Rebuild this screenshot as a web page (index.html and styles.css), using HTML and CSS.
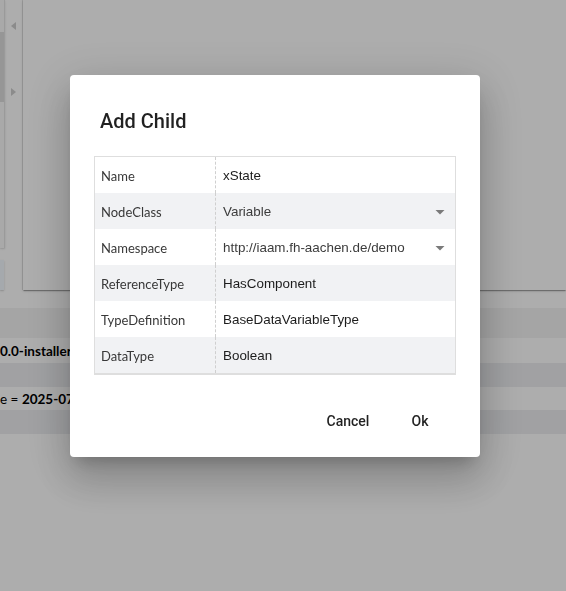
FILE: index.html
```html
<!DOCTYPE html>
<html lang="en">
<head>
<meta charset="utf-8">
<title>Add Child</title>
<link rel="stylesheet" href="styles.css">
</head>
<body>
<div class="page">
  <div class="top">
    <div class="rail">
      <div class="strip"><div class="thumb"></div></div>
      <div class="railbtn"></div>
    </div>
    <div class="arrows">
      <span class="arr arr-left"></span>
      <span class="arr arr-right"></span>
    </div>
    <div class="card"></div>
  </div>
  <div class="list">
    <div class="band b1"></div>
    <div class="band b2 shade"></div>
    <div class="band b3"><span class="line"><b>0.0-installer,</b></span></div>
    <div class="band b4 shade2"></div>
    <div class="band b5"><span class="line">e = <b>2025-07</b></span></div>
    <div class="band b6 shade2"></div>
  </div>
</div>

<div class="overlay"></div>

<div class="dialog" role="dialog" aria-labelledby="dlg-title">
  <h2 class="dialog-title" id="dlg-title">Add Child</h2>
  <div class="props">
    <div class="prop">
      <div class="prop-key">Name</div>
      <div class="prop-val">xState</div>
    </div>
    <div class="prop alt">
      <div class="prop-key">NodeClass</div>
      <div class="prop-val select"><span>Variable</span>
        <svg class="caret" viewBox="0 0 24 24" width="24" height="24"><path d="M7.5 10l4.5 4.5 4.5-4.5z"/></svg>
      </div>
    </div>
    <div class="prop">
      <div class="prop-key">Namespace</div>
      <div class="prop-val select"><span>http://iaam.fh-aachen.de/demo</span>
        <svg class="caret" viewBox="0 0 24 24" width="24" height="24"><path d="M7.5 10l4.5 4.5 4.5-4.5z"/></svg>
      </div>
    </div>
    <div class="prop alt">
      <div class="prop-key">ReferenceType</div>
      <div class="prop-val">HasComponent</div>
    </div>
    <div class="prop">
      <div class="prop-key">TypeDefinition</div>
      <div class="prop-val">BaseDataVariableType</div>
    </div>
    <div class="prop alt">
      <div class="prop-key">DataType</div>
      <div class="prop-val">Boolean</div>
    </div>
  </div>
  <div class="dialog-actions">
    <button class="btn" type="button">Cancel</button>
    <button class="btn" type="button">Ok</button>
  </div>
</div>
</body>
</html>
```

FILE: styles.css
```css
html, body {
  margin: 0;
  padding: 0;
}
body {
  width: 566px;
  height: 591px;
  overflow: hidden;
  background: #ffffff;
  font-family: "Lato", "Noto Sans", sans-serif;
}

/* ---------- background page ---------- */
.page {
  display: flex;
  flex-direction: column;
  height: 591px;
}
.top {
  display: flex;
  height: 290px;
  flex: none;
}
.rail {
  width: 5px;
  display: flex;
  flex-direction: column;
  gap: 12px;
}
.strip {
  height: 248px;
  background: #fafafa;
  border-right: 1px solid #e4e4e4;
  padding-top: 32px;
  box-sizing: border-box;
  box-shadow: 0 1px 2px rgba(0,0,0,0.15);
}
.thumb {
  width: 4px;
  height: 70px;
  background: #dedede;
}
.railbtn {
  width: 4px;
  height: 30px;
  background: #f4faff;
  box-shadow: 0 1px 2px rgba(0,0,0,0.2);
}
.arrows {
  width: 18px;
  border-right: 1px solid #e6e6e6;
  display: flex;
  flex-direction: column;
  align-items: center;
  padding-top: 22px;
  gap: 58px;
  box-sizing: border-box;
}
.arr {
  width: 0;
  height: 0;
  border-top: 4px solid transparent;
  border-bottom: 4px solid transparent;
}
.arr-left { border-right: 5px solid #cdcdcd; }
.arr-right { border-left: 5px solid #cdcdcd; }
.card {
  flex: 1;
  background: #ffffff;
  box-shadow: 0 2px 1px -1px rgba(0,0,0,0.2), 0 1px 1px 0 rgba(0,0,0,0.14), 0 1px 3px 0 rgba(0,0,0,0.12);
}
.list {
  display: flex;
  flex-direction: column;
}
.band {
  display: flex;
  align-items: center;
  font-size: 13.5px;
  color: #000;
  white-space: nowrap;
}
.b1 { height: 18px; }
.b2 { height: 30px; }
.b3 { height: 25px; }
.b4 { height: 24px; }
.b5 { height: 23px; }
.b6 { height: 24px; }
.shade { background: #f4f4f4; }
.shade2 { background: #edeef1; }
.line b { font-weight: 700; }

/* ---------- modal ---------- */
.overlay {
  position: fixed;
  inset: 0;
  background: rgba(0,0,0,0.32);
}
.dialog {
  position: fixed;
  left: 70px;
  top: 75px;
  width: 410px;
  box-sizing: border-box;
  background: #ffffff;
  border-radius: 4px;
  box-shadow: 0 11px 15px -7px rgba(0,0,0,0.2), 0 24px 38px 3px rgba(0,0,0,0.14), 0 9px 46px 8px rgba(0,0,0,0.12);
  padding: 30px 24px 18px;
  display: flex;
  flex-direction: column;
}
.dialog-title {
  margin: 0 0 19px;
  padding-left: 6px;
  font-family: "Roboto", sans-serif;
  font-weight: 500;
  font-size: 20px;
  line-height: 32px;
  color: rgba(0,0,0,0.87);
}
.props {
  border: 1px solid #dedede;
  border-bottom-width: 2px;
}
.prop {
  display: grid;
  grid-template-columns: 121px 1fr;
  height: 36px;
  background: #ffffff;
}
.prop.alt { background: #f1f2f4; }
.prop-key {
  display: flex;
  align-items: center;
  padding-left: 6px;
  padding-top: 1px;
  border-right: 1px dashed #cfcfcf;
  font-family: "Lato", "Noto Sans", sans-serif;
  font-size: 13px;
  color: #383838;
}
.prop-val {
  display: flex;
  align-items: center;
  padding-left: 7px;
  padding-top: 1px;
  font-family: "Liberation Sans", Arial, sans-serif;
  font-size: 13.4px;
  color: #1c1c1c;
}
.prop-val.select {
  justify-content: space-between;
  padding-right: 3px;
  color: #3c3c3c;
}
.caret {
  fill: #7a7a7a;
  margin-top: 1px;
}
.dialog-actions {
  display: flex;
  justify-content: flex-end;
  gap: 8px;
  margin-top: 28px;
  padding-right: 4px;
}
.btn {
  min-width: 64px;
  height: 36px;
  padding: 6px 8px;
  border: 0;
  background: transparent;
  font-family: "Roboto", sans-serif;
  font-weight: 500;
  font-size: 14px;
  color: rgba(0,0,0,0.87);
  border-radius: 4px;
  cursor: pointer;
}
```
